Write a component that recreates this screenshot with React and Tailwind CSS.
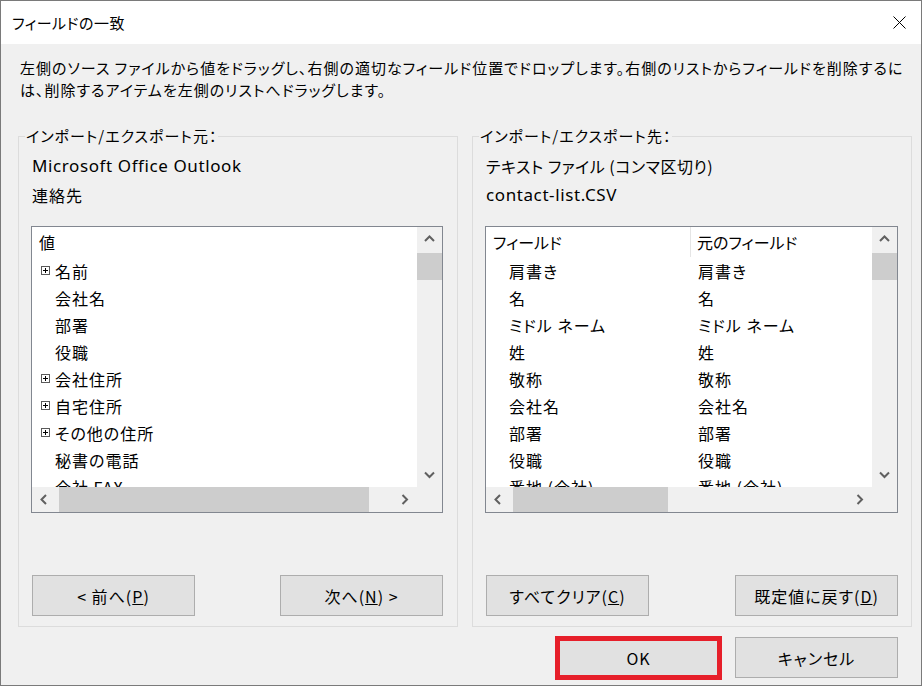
import React from 'react';

const Chevron = ({ dir }) => {
  const paths = {
    up: 'M1 6 L5.5 1.5 L10 6',
    down: 'M1 1.5 L5.5 6 L10 1.5',
    left: 'M6 1 L1.5 5.5 L6 10',
    right: 'M1.5 1 L6 5.5 L1.5 10',
  };
  const vertical = dir === 'up' || dir === 'down';
  return (
    <svg width={vertical ? 11 : 8} height={vertical ? 8 : 11} viewBox={vertical ? '0 0 11 8' : '0 0 8 11'}>
      <path d={paths[dir]} fill="none" stroke="#606060" strokeWidth="2" />
    </svg>
  );
};

const PlusBox = () => (
  <svg width="9" height="9" viewBox="0 0 9 9" className="mr-[5px]">
    <rect x="0.5" y="0.5" width="8" height="8" fill="white" stroke="#5a5a5a" />
    <path d="M2 4.5 H7 M4.5 2 V7" stroke="#000" />
  </svg>
);

const Btn = ({ children, className = '' }) => (
  <div className={`w-[163px] h-[41px] bg-[#e1e1e1] border border-[#adadad] flex items-center justify-center text-[16px] tracking-[1px] ${className}`}>
    {children}
  </div>
);

const ScrollBox = ({ width, thumbW, children }) => (
  <div className={`${width} h-[287px] border border-[#828790] bg-white flex flex-col`}>
    <div className="flex h-[260px]">
      <div className="flex-1 overflow-hidden">{children}</div>
      <div className="w-[25px] bg-[#f0f0f0] flex flex-col">
        <div className="h-[24px] flex items-center justify-center"><Chevron dir="up" /></div>
        <div className="h-[27px] mt-[2px] bg-[#cdcdcd]" />
        <div className="flex-1" />
        <div className="h-[24px] flex items-center justify-center"><Chevron dir="down" /></div>
      </div>
    </div>
    <div className="flex h-[25px] bg-[#f0f0f0]">
      <div className="w-[24px] flex items-center justify-center"><Chevron dir="left" /></div>
      <div className="flex-1 pl-[3px]">
        <div className={`${thumbW} h-full bg-[#cdcdcd]`} />
      </div>
      <div className="w-[24px] flex items-center justify-center"><Chevron dir="right" /></div>
      <div className="w-[25px]" />
    </div>
  </div>
);

const leftItems = [
  ['名前', true],
  ['会社名', false],
  ['部署', false],
  ['役職', false],
  ['会社住所', true],
  ['自宅住所', true],
  ['その他の住所', true],
  ['秘書の電話', false],
  ['会社 FAX', false],
];

const rightItems = ['肩書き', '名', 'ミドル ネーム', '姓', '敬称', '会社名', '部署', '役職', '番地 (会社)'];

export default function App() {
  return (
    <div className="w-[923px] h-[687px] bg-white font-['Noto_Sans_CJK_JP',sans-serif] [font-feature-settings:'palt'] text-black">
      <div className="w-[922px] h-[686px] border border-[#7a7a7a] bg-[#f0f0f0] flex flex-col">
        {/* title bar */}
        <div className="h-[43px] bg-white flex items-center justify-between pl-[11px] pr-[15px]">
          <span className="text-[15px] leading-[20px] tracking-[0.5px]">フィールドの一致</span>
          <svg width="13" height="13" viewBox="0 0 13 13">
            <path d="M0.5 0.5 L12.5 12.5 M12.5 0.5 L0.5 12.5" stroke="#000" strokeWidth="1" />
          </svg>
        </div>

        <div className="pt-[13px] pl-[19px] text-[15px] leading-[22px] tracking-[1px]">
          <div className="whitespace-nowrap">左側のソース ファイルから値をドラッグし、右側の適切なフィールド位置でドロップします。右側のリストからフィールドを削除するに</div>
          <div className="whitespace-nowrap">は、削除するアイテムを左側のリストへドラッグします。</div>
        </div>

        <div className="flex gap-[14px] pl-[17px] mt-[25px]">
          {/* source */}
          <fieldset className="w-[440px] border border-[#dcdcdc] px-[12px] pb-[10px]">
            <legend className="ml-[-6px] px-[1px] text-[15px] leading-[20px] tracking-[1px]">インポート/エクスポート元：</legend>
            <div className="pt-[9px] pl-[1px] font-['Noto_Sans',sans-serif] text-[17px] tracking-[0.6px] leading-[22px]">Microsoft Office Outlook</div>
            <div className="mt-[7px] pl-[1px] text-[16px] leading-[22px] tracking-[1px]">連絡先</div>
            <div className="mt-[20px]">
              <ScrollBox width="w-[412px]" thumbW="w-[310px]">
                <div className="h-[30px] flex items-center pl-[7px] text-[16px]">値</div>
                {leftItems.map(([label, plus]) => (
                  <div key={label} className="h-[27px] flex items-center text-[16px] tracking-[1px] whitespace-nowrap pl-[9px]">
                    {plus ? <PlusBox /> : <span className="w-[14px]" />}
                    <span>{label}</span>
                  </div>
                ))}
              </ScrollBox>
            </div>
            <div className="flex justify-between mt-[62px] pl-[1px] w-[412px]">
              <Btn>&lt; 前へ(<span className="underline">P</span>)</Btn>
              <Btn>次へ(<span className="underline">N</span>) &gt;</Btn>
            </div>
          </fieldset>

          {/* destination */}
          <fieldset className="w-[440px] border border-[#dcdcdc] px-[12px] pb-[10px]">
            <legend className="ml-[-6px] px-[1px] text-[15px] leading-[20px] tracking-[1px]">インポート/エクスポート先：</legend>
            <div className="pt-[9px] pl-[1px] text-[16px] leading-[22px] tracking-[0.5px]">テキスト ファイル (コンマ区切り)</div>
            <div className="mt-[7px] pl-[1px] font-['Noto_Sans',sans-serif] text-[17px] tracking-[0.6px] leading-[22px]">contact-list.CSV</div>
            <div className="mt-[20px]">
              <ScrollBox width="w-[413px]" thumbW="w-[155px]">
                <div className="h-[30px] flex text-[16px]">
                  <div className="w-[205px] flex items-center pl-[7px] border-r border-[#e5e5e5]">フィールド</div>
                  <div className="flex-1 flex items-center pl-[6px]">元のフィールド</div>
                </div>
                {rightItems.map((label) => (
                  <div key={label} className="h-[27px] flex items-center text-[16px] tracking-[1px] whitespace-nowrap">
                    <div className="w-[206px] pl-[23px]">{label}</div>
                    <div className="pl-[6px]">{label}</div>
                  </div>
                ))}
              </ScrollBox>
            </div>
            <div className="flex justify-between mt-[62px] pl-[1px] w-[413px]">
              <Btn>すべてクリア(<span className="underline">C</span>)</Btn>
              <Btn>既定値に戻す(<span className="underline">D</span>)</Btn>
            </div>
          </fieldset>
        </div>

        <div className="flex justify-end gap-[15px] pr-[23px] mt-[10px]">
          <div className="relative">
            <Btn className="h-[37px]">OK</Btn>
            <span className="absolute left-[-2px] right-[-2px] top-[-1px] bottom-[-2px] border-[5px] border-[#e61f2a]" />
          </div>
          <Btn className="h-[37px]">キャンセル</Btn>
        </div>
      </div>
    </div>
  );
}
